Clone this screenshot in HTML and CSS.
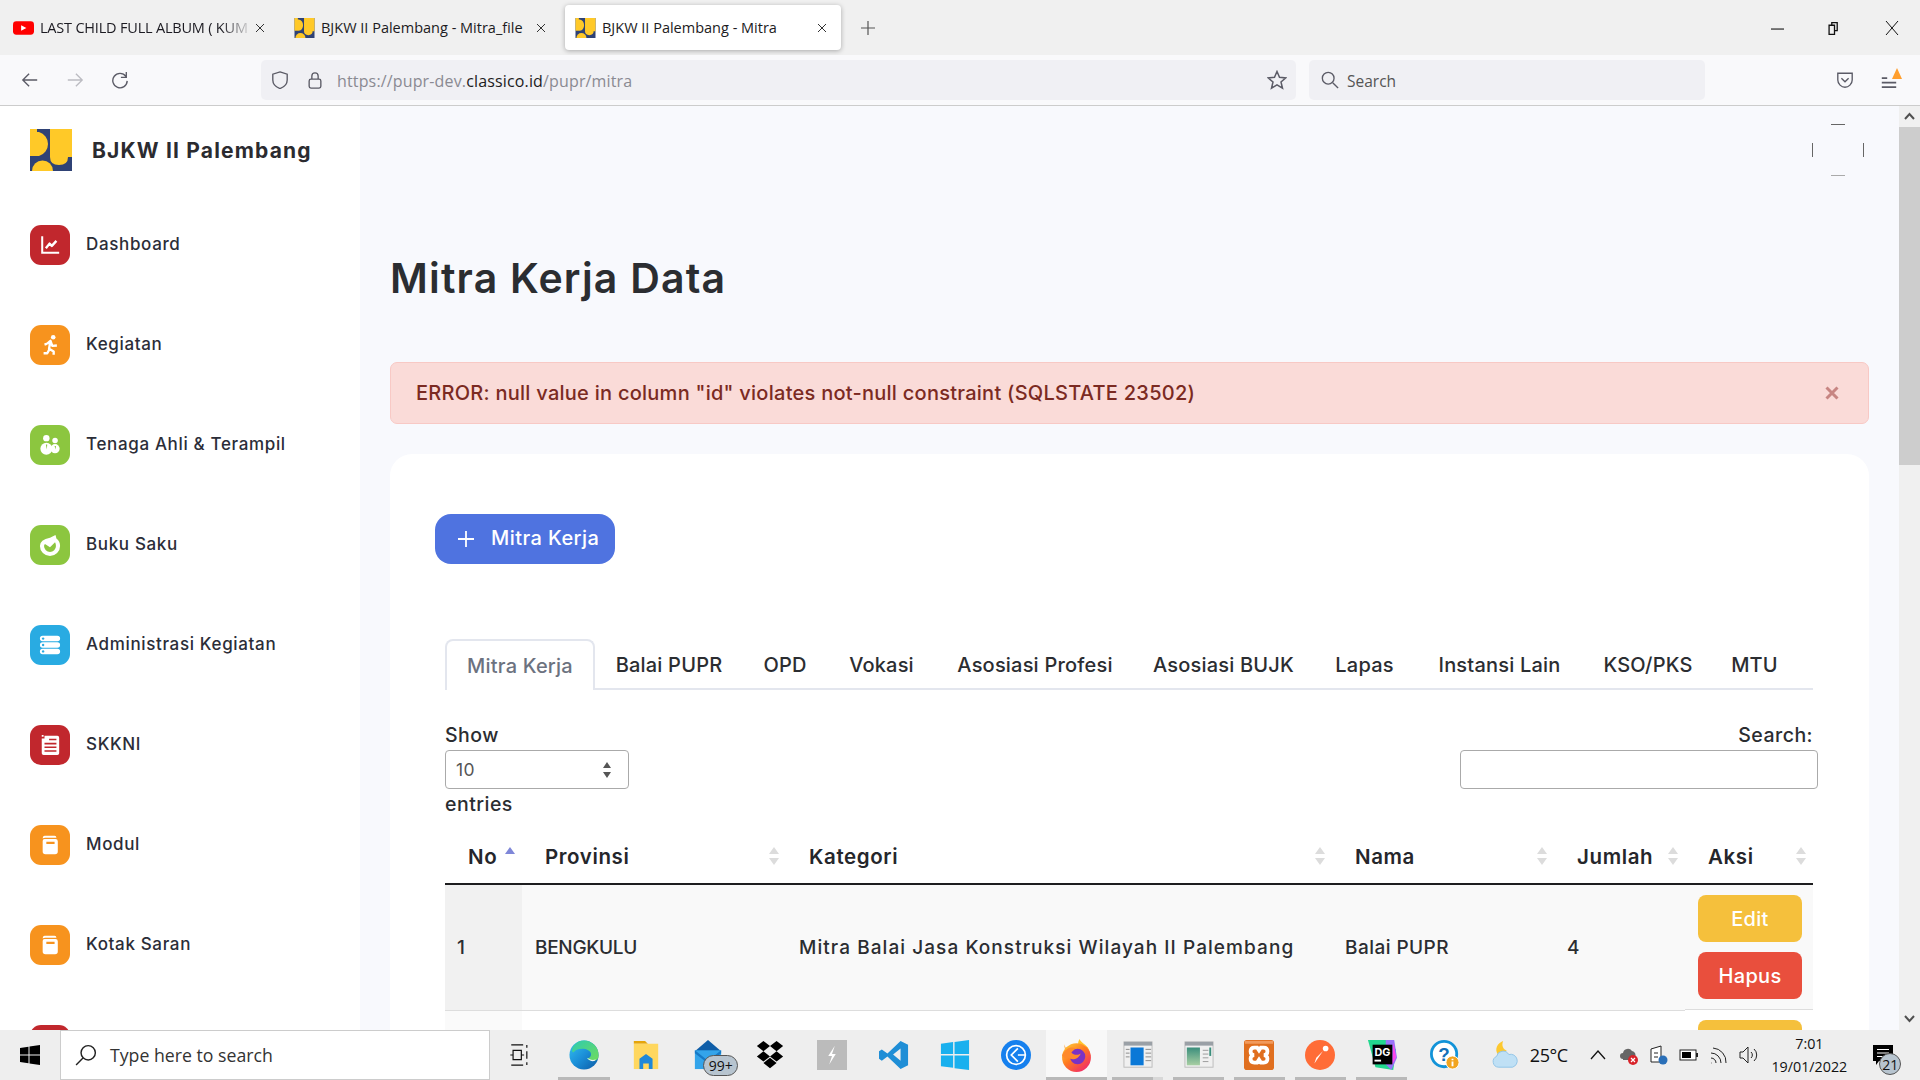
FILE: index.html
```html
<!DOCTYPE html>
<html lang="id">
<head>
<meta charset="utf-8">
<title>BJKW II Palembang - Mitra</title>
<link rel="stylesheet" href="styles.css">
</head>
<body>
<svg class="defs" width="0" height="0" aria-hidden="true">
  <symbol id="pupr" viewBox="0 0 42 42">
    <rect width="42" height="42" fill="#2f4275"/>
    <path fill="#ffc928" d="M0 0H7V3H9A12.500 12.500 0 0 1 9 27H0Z"/>
    <path fill="#ffc928" d="M2 42A10.500 10.500 0 0 1 23 42Z"/>
    <path fill="#ffc928" d="M20 0H42V28H38Q38 36 29 36Q20 36 20 28Z"/>
  </symbol>
  <symbol id="book" viewBox="0 0 24 24">
    <path fill="#fff" d="M6 2h11q2 0 2 2H7q-2 0-3 1q0-3 2-3Z"/>
    <path fill="#fff" fill-rule="evenodd" d="M6 5.500h12q2.500 0 2.500 2.500v11q0 3-3 3H7q-3 0-3-3V7.500q0-2 2-2ZM8 8.500v2.500h9V8.500Z"/>
  </symbol>
</svg>

<header class="tabbar">
  <div class="tab">
    <svg class="fav" viewBox="0 0 22 14"><rect width="22" height="14" rx="3.500" fill="#f00"/><path d="M8.500 4v6l5.500-3Z" fill="#fff"/></svg>
    <span class="tab-title fade">LAST CHILD FULL ALBUM ( KUM</span>
    <svg class="x" viewBox="0 0 10 10"><path d="M1 1l8 8M9 1l-8 8"/></svg>
  </div>
  <div class="tab">
    <svg class="fav"><use href="#pupr"/></svg>
    <span class="tab-title">BJKW II Palembang - Mitra_file</span>
    <svg class="x" viewBox="0 0 10 10"><path d="M1 1l8 8M9 1l-8 8"/></svg>
  </div>
  <div class="tab active">
    <svg class="fav"><use href="#pupr"/></svg>
    <span class="tab-title">BJKW II Palembang - Mitra</span>
    <svg class="x" viewBox="0 0 10 10"><path d="M1 1l8 8M9 1l-8 8"/></svg>
  </div>
  <svg class="newtab" viewBox="0 0 14 14"><path d="M7 0v14M0 7h14"/></svg>
  <div class="winctl">
    <svg viewBox="0 0 12 12"><path d="M0 6.500h12"/></svg>
    <svg viewBox="0 0 12 12"><path d="M3.500 3V.5h5V8H6M1 3h5v8.500H1Z" stroke-width="1.200"/></svg>
    <svg class="wx" viewBox="0 0 14 14"><path d="M1 0l12 14M13 0L1 14"/></svg>
  </div>
</header>

<nav class="toolbar">
  <svg class="tb" viewBox="0 0 20 20"><path d="M18 10H2M9 3l-7 7 7 7"/></svg>
  <svg class="tb dim" viewBox="0 0 20 20"><path d="M2 10h16M11 3l7 7-7 7"/></svg>
  <svg class="tb" viewBox="0 0 20 20"><path d="M16.500 6A8 8 0 1 0 18 11M17 1v6h-6"/></svg>
  <div class="urlbar">
    <svg class="ub shield" viewBox="0 0 20 20"><path d="M10 1l8 2.500v6.500c0 4.500-4 8-8 9.500-4-1.500-8-5-8-9.500V3.500Z"/></svg>
    <svg class="ub lock" viewBox="0 0 20 20"><rect x="3.500" y="9" width="13" height="10" rx="2"/><path d="M6.500 9V5.500a3.500 3.500 0 0 1 7 0V9"/></svg>
    <span class="url">https://pupr-dev.<b>classico.id</b>/pupr/mitra</span>
    <svg class="ub star" viewBox="0 0 20 20"><path d="M10 1.500l2.500 5.800 6.300.6-4.800 4.100 1.500 6.200-5.500-3.300-5.500 3.300 1.500-6.200L1.200 7.900l6.300-.6Z"/></svg>
  </div>
  <div class="searchbar">
    <svg class="ub" viewBox="0 0 20 20"><circle cx="8" cy="8" r="6.500"/><path d="M13 13l6 6"/></svg>
    <span>Search</span>
  </div>
  <svg class="tb pocket" viewBox="0 0 20 20"><path d="M2 2.500h16V10c0 4.500-4 8-8 8s-8-3.500-8-8Z"/><path d="M6 8l4 4 4-4"/></svg>
  <div class="menu">
    <svg viewBox="0 0 20 20"><path d="M2 8h6M2 13h16M2 18h16"/></svg>
    <i class="update"></i>
  </div>
</nav>

<div class="viewport">
  <aside class="sidebar">
    <div class="brand">
      <svg class="logo"><use href="#pupr"/></svg>
      <span>BJKW II Palembang</span>
    </div>
    <ul class="nav">
      <li><span class="ico red"><svg viewBox="0 0 24 24"><path class="s" d="M3.500 2.500V20.500H22"/><path class="s t" d="M7.500 15.500l4-5 2.500 2.500 5-5.500"/></svg></span><span class="lbl">Dashboard</span></li>
      <li><span class="ico orange"><svg viewBox="0 0 24 24"><circle cx="15.500" cy="3.500" r="2.500" fill="#fff"/><path class="s t" d="M5 21h4l2.500-4.500-.5-.5M9 10.500l3.500-3 2 5.500 5-.5M12.500 7.500L11 16l5 3v3.500M9 10.500l-3 1"/></svg></span><span class="lbl">Kegiatan</span></li>
      <li><span class="ico green"><svg viewBox="0 0 24 24"><circle cx="8" cy="4.500" r="3.500" fill="#fff"/><circle cx="17.500" cy="7" r="3" fill="#fff"/><circle cx="8" cy="16" r="6.500" fill="#fff"/><circle cx="17.500" cy="16" r="5" fill="#fff"/><path d="M7.500 11.500h1.500l-.5 5.500ZM17 13h1.500l-.5 4Z" fill="#8cc63f"/></svg></span><span class="lbl">Tenaga Ahli &amp; Terampil</span></li>
      <li><span class="ico green"><svg viewBox="0 0 24 24"><path fill="#fff" fill-rule="evenodd" d="M12 4l6-3 1 4q4 3 4 8a11 11 0 0 1-22 0Q1 6 12 4ZM6.500 11l5.500 3.500 5.500-5.500q1 2 1 4a6.500 6.500 0 0 1-13 0Q5.500 12 6.500 11Z"/></svg></span><span class="lbl">Buku Saku</span></li>
      <li><span class="ico blue"><svg viewBox="0 0 24 24"><rect x="1" y="2" width="22" height="6" rx="3" fill="#fff"/><rect x="1" y="9" width="22" height="6" rx="3" fill="#fff"/><rect x="1" y="16" width="22" height="6" rx="3" fill="#fff"/><circle cx="4.500" cy="5" r="1.300" fill="#29abe2"/><circle cx="4.500" cy="12" r="1.300" fill="#29abe2"/><circle cx="4.500" cy="19" r="1.300" fill="#29abe2"/></svg></span><span class="lbl">Administrasi Kegiatan</span></li>
      <li><span class="ico red"><svg viewBox="0 0 24 24"><path fill="#fff" d="M3 1h2v2H3ZM6 2h14q2 0 2 2v17q0 2-2 2H5q-2 0-2-2V5h3Z"/><path stroke="#c1272d" stroke-width="1.800" d="M11 6h8M6 10.500h13M6 14.500h13M6 18.500h13"/></svg></span><span class="lbl">SKKNI</span></li>
      <li><span class="ico orange"><svg viewBox="0 0 24 24"><use href="#book"/></svg></span><span class="lbl">Modul</span></li>
      <li><span class="ico orange"><svg viewBox="0 0 24 24"><use href="#book"/></svg></span><span class="lbl">Kotak Saran</span></li>
      <li><span class="ico red"></span></li>
    </ul>
  </aside>

  <main class="main">
    <div class="topbar">
      <svg class="avatar" viewBox="0 0 54 54"><path d="M20 1.500h14M1.500 20v14M52.500 20v14" stroke="#666"/><path d="M20 52.500h14" stroke="#aaa"/></svg>
    </div>
    <h1 class="title">Mitra Kerja Data</h1>
    <div class="alert">
      <span>ERROR: null value in column "id" violates not-null constraint (SQLSTATE 23502)</span>
      <svg class="alert-x" viewBox="0 0 14 14"><path d="M1.500 1.500l11 11M12.500 1.500l-11 11"/></svg>
    </div>
    <section class="card">
      <button class="add" type="button"><svg viewBox="0 0 18 18"><path d="M9 1v16M1 9h16"/></svg><span>Mitra Kerja</span></button>
      <div class="panel">
        <div class="tabs">
          <a class="on">Mitra Kerja</a><a>Balai PUPR</a><a>OPD</a><a>Vokasi</a><a>Asosiasi Profesi</a><a>Asosiasi BUJK</a><a>Lapas</a><a>Instansi Lain</a><a>KSO/PKS</a><a>MTU</a>
        </div>
        <div class="controls">
          <div class="length">
            <div>Show</div>
            <div class="select"><span>10</span><svg viewBox="0 0 10 18"><path d="M5 1l4 6H1ZM5 17l4-6H1Z" fill="#555"/></svg></div>
            <div>entries</div>
          </div>
          <div class="filter">
            <div>Search:</div>
            <input class="input" type="text" aria-label="Search">
          </div>
        </div>
        <table class="table">
          <colgroup><col class="c1"><col class="c2"><col class="c3"><col class="c4"><col class="c5"><col class="c6"></colgroup>
          <thead>
            <tr><th class="asc">No</th><th>Provinsi</th><th>Kategori</th><th>Nama</th><th>Jumlah</th><th>Aksi</th></tr>
          </thead>
          <tbody>
            <tr class="odd">
              <td class="sorted">1</td><td class="caps">BENGKULU</td><td class="long">Mitra Balai Jasa Konstruksi Wilayah II Palembang</td><td>Balai PUPR</td><td>4</td>
              <td class="act"><a class="btn edit">Edit</a><a class="btn del">Hapus</a></td>
            </tr>
            <tr>
              <td class="sorted"></td><td></td><td></td><td></td><td></td>
              <td class="act"><span class="btn edit"></span><span class="btn del"></span></td>
            </tr>
          </tbody>
        </table>
      </div>
    </section>
  </main>

  <div class="scrollbar">
    <svg class="sb-btn" viewBox="0 0 21 21"><path d="M6 13l4.500-5 4.500 5"/></svg>
    <div class="thumb"></div>
    <svg class="sb-btn bottom" viewBox="0 0 21 21"><path d="M6 8l4.500 5 4.500-5"/></svg>
  </div>
</div>

<footer class="taskbar">
  <div class="start"><svg viewBox="0 0 20 20"><path fill="#000" d="M0 3l8.500-1.200V9.500H0ZM9.500 1.600L20 0v9.500H9.500ZM0 10.500h8.500v7.700L0 17ZM9.500 10.500H20V20L9.500 18.400Z"/></svg></div>
  <div class="tsearch">
    <svg viewBox="0 0 20 20"><circle cx="12" cy="8" r="6.500"/><path d="M7.500 12.500L1 19"/></svg>
    <span>Type here to search</span>
  </div>
  <div class="taskview"><svg viewBox="0 0 20 24"><path d="M1 1h13M1 23h13M3 7h9v10H3ZM0 12h3M12 12h3M18 1v3M18 8v8M18 20v3"/></svg></div>

  <div class="task run wide"><svg viewBox="0 0 32 32"><defs><linearGradient id="edge" x1="0" y1="0" x2="1" y2="1"><stop offset="0" stop-color="#35c1f1"/><stop offset=".5" stop-color="#1b8fd8"/><stop offset="1" stop-color="#0c59a4"/></linearGradient><linearGradient id="edge2" x1="0" y1="0" x2="1" y2="1"><stop offset="0" stop-color="#2ecbb0"/><stop offset="1" stop-color="#6fdc5c"/></linearGradient></defs><circle cx="16" cy="16" r="15.500" fill="url(#edge)"/><path fill="url(#edge2)" d="M16 .5A15.500 15.500 0 0 1 31.500 17q0 5-6 5-4 0-6-2 4-1 4-5C23 9 10 7 5 13 2 14 3 7 6 5 9 2 12 .5 16 .5Z"/><path fill="#eef4f8" d="M19 19c3 2 7 3 9.500 1.500-.5 3-6 3-9.500-1.500Z"/></svg></div>
  <div class="task wide"><svg viewBox="0 0 32 32"><path fill="#e5a50a" d="M3 1h12l3 3h-15Z"/><path fill="#ffd75e" d="M3 4h26v27H3Z"/><path fill="#1e88d8" d="M9 31V20l7-5 7 5v11h-4v-6h-6v6Z"/></svg></div>
  <div class="task wide"><svg viewBox="0 0 32 32"><path fill="#0f5ea8" d="M16 0l14 12H2Z"/><rect x="2" y="11" width="28" height="20" fill="#33a4ea"/><path fill="#1679c6" d="M2 11l14 11 14-11v3L16 25 2 14Z"/></svg><span class="badge mail">99+</span></div>
  <div class="task wide"><svg viewBox="0 0 32 32"><path fill="#000" d="M9 1l7 5.500L9 12 2 6.500ZM23 1l7 5.500L23 12l-7-5.500ZM9 12l7 5.500L9 23l-7-5.500ZM23 12l7 5.500L23 23l-7-5.500ZM16 19l7 5.500L16 30l-7-5.500Z"/></svg></div>
  <div class="task wide"><svg viewBox="0 0 32 32"><rect width="32" height="32" fill="#bbb"/><path fill="#fff" d="M19 6l-7 11h4l-3 9 7-11h-4Z"/></svg></div>
  <div class="task"><svg viewBox="0 0 32 32"><path fill="#1f8ed6" d="M23 1l8 4v22l-8 4-14-13.500L3 22l-3-2V12l3-2 6 4.500ZM23 9l-8 6.500 8 6.500Z"/></svg></div>
  <div class="task"><svg viewBox="0 0 32 32"><path fill="#19b0ee" d="M1 4l13-2v13H1ZM15.500 2L31 0v15H15.500ZM1 16.500h13v13L1 28ZM15.500 16.500H31V32l-15.500-2Z"/></svg></div>
  <div class="task narrow"><svg viewBox="0 0 32 32"><circle cx="16" cy="16" r="16" fill="#1680ee"/><circle cx="16" cy="16" r="10" fill="none" stroke="#fff" stroke-width="1.800"/><path d="M18 9l-7 7 7 7M18 16h8" fill="none" stroke="#fff" stroke-width="1.800"/></svg></div>
  <div class="task run active"><svg class="fox" viewBox="0 0 32 32"><defs><linearGradient id="ff" x1="0" y1="0" x2=".8" y2="1"><stop offset="0" stop-color="#ffd53d"/><stop offset=".5" stop-color="#ff7a1f"/><stop offset="1" stop-color="#f0266f"/></linearGradient></defs><path fill="#ffc52e" d="M19 0c1 4 9 6 10 13l-9-2c-3-4-3-8-1-11Z"/><path fill="#ff9a2a" d="M4 5l2 5 6-1-6 8Z"/><circle cx="16" cy="18" r="14" fill="url(#ff)"/><circle cx="17" cy="17" r="7.500" fill="#7a32c4"/><path fill="#ff8a2b" d="M2 16c3-7 9-9 13-7l-4 4c2 3 7 3 9 1-2 6-9 7-12 4-2 2-4 1-6-2Z"/></svg></div>
  <div class="task run split"><svg viewBox="0 0 32 32"><rect x="1" y="2" width="30" height="27" fill="#f0f0f0" stroke="#bbb"/><rect x="1" y="2" width="30" height="4" fill="#9aa0a6"/><rect x="8" y="8" width="14" height="19" fill="#0a78d7"/><path d="M3 10h4M3 14h4M3 18h4M24 10h6M24 14h6M24 18h6M24 22h6" stroke="#888"/></svg></div>
  <div class="task run narrow"><svg viewBox="0 0 32 32"><rect x="1" y="2" width="30" height="27" fill="#f0f0f0" stroke="#bbb"/><rect x="1" y="2" width="30" height="4" fill="#9aa0a6"/><defs><linearGradient id="ap" x1="0" y1="0" x2="0" y2="1"><stop offset="0" stop-color="#3b8e7c"/><stop offset="1" stop-color="#a8cfa3"/></linearGradient></defs><rect x="3" y="8" width="14" height="19" fill="url(#ap)"/><path d="M20 11h6M20 15h6M20 19h6M20 23h6" stroke="#999"/><rect x="27" y="8" width="2" height="9" fill="#3b8e7c"/></svg></div>
  <div class="task run"><svg viewBox="0 0 32 32"><rect width="32" height="32" rx="3" fill="#e06f1f"/><rect x="1" y="1" width="30" height="3" fill="#f19a5c"/><path fill="none" stroke="#fff" stroke-width="4" d="M11 8h3l2 3 2-3h3q4 0 4 4t-4 4q4 0 4 4t-4 4h-3l-2-3-2 3h-3q-4 0-4-4t4-4q-4 0-4-4t4-4Z"/></svg></div>
  <div class="task run"><svg viewBox="0 0 32 32"><circle cx="16" cy="16" r="16" fill="#ff6c37"/><path d="M24 7l-5 5-9 13 2-6Z" fill="#fff"/><circle cx="22" cy="9" r="3" fill="#fff"/></svg></div>
  <div class="task run gapr"><svg viewBox="0 0 32 32"><path fill="#22d88f" d="M1 0h20L31 10 28 32 9 29Z"/><path fill="#9775f8" d="M20 0h9l3 19-6 13-6-6Z"/><path fill="#ff45ed" d="M28 3l3 15-4 8Z"/><rect x="6" y="5" width="21" height="21" fill="#000"/><text x="16.500" y="17" class="dg">DG</text><rect x="8" y="21" width="7" height="2" fill="#fff"/></svg></div>
  <div class="task"><svg viewBox="0 0 32 32"><circle cx="15" cy="15" r="13.500" fill="#fff" stroke="#1293d8" stroke-width="3"/><text x="15" y="22" class="help">?</text><circle cx="24" cy="24" r="7" fill="#f2a51f" stroke="#fff"/><path d="M24 20v1.500M24 23v5" stroke="#fff" stroke-width="2"/></svg></div>

  <div class="tray">
    <svg class="weather" viewBox="0 0 32 32"><path fill="#fdc82f" d="M14 1c-2 5 0 9 4 10l-9 5C4 10 8 3 14 1Z"/><path fill="#bfe0f5" stroke="#8fc3e6" d="M9 29a6 6 0 0 1-2-11.500 7 7 0 0 1 13-2A6.500 6.500 0 0 1 24 29Z"/></svg>
    <span class="temp">25°C</span>
    <svg class="chev" viewBox="0 0 16 10"><path d="M1 9l7-8 7 8"/></svg>
    <svg class="tri" viewBox="0 0 20 20"><path fill="#666" d="M4 14a3 3 0 0 1 0-6 5 5 0 0 1 9-2 4 4 0 0 1 3 6l-3 3H4Z"/><circle cx="14" cy="15" r="5" fill="#d8232a"/><path d="M12 13l4 4M16 13l-4 4" stroke="#fff" stroke-width="1.200"/></svg>
    <svg class="tri" viewBox="0 0 20 20"><path d="M2 4l10-3v16H2Z" fill="#fff" stroke="#222"/><path d="M5 8h4M5 12h4" stroke="#222"/><circle cx="14" cy="15" r="4.500" fill="#2a6fb8"/></svg>
    <svg class="tri" viewBox="0 0 20 20"><rect x="1" y="5" width="16" height="10" fill="#fff" stroke="#222"/><rect x="3" y="7" width="9" height="6" fill="#000"/><rect x="17" y="8" width="2" height="4" fill="#222"/></svg>
    <svg class="tri thin" viewBox="0 0 20 20"><path d="M2 18h.5M2 13a5 5 0 0 1 5 5M2 8a10 10 0 0 1 10 10M4 3a14 14 0 0 1 13 15"/></svg>
    <svg class="tri thin" viewBox="0 0 20 20"><path d="M1 7h3l5-5v16l-5-5H1ZM12 7a4 4 0 0 1 0 6M15 4a8 8 0 0 1 0 12"/></svg>
    <div class="clock"><span>7:01</span><span>19/01/2022</span></div>
    <div class="notify">
      <svg viewBox="0 0 20 20"><path d="M0 0h20v16H6l-3 4v-4H0Z" fill="#000"/><path d="M4 4.500h12M4 8h12M4 11.500h12" stroke="#fff"/></svg>
      <span class="badge count">21</span>
    </div>
  </div>
</footer>
</body>
</html>
```

FILE: styles.css
```css
* { box-sizing: border-box; }
html, body { margin: 0; height: 100%; overflow: hidden; }
body {
  display: flex;
  flex-direction: column;
  width: 1920px;
  height: 1080px;
  font-family: Inter, "Liberation Sans", sans-serif;
  color: #2a2c33;
  background: #fff;
}
svg { display: block; flex: none; }
.defs { position: absolute; }

/* browser tabs */
.tabbar {
  height: 55px;
  flex: none;
  display: flex;
  align-items: flex-start;
  padding: 5px 0 0 3px;
  gap: 5px;
  background: #f0f0f0;
  font: 14.500px "Open Sans", sans-serif;
  color: #1c1b22;
}
.tab {
  width: 276px;
  height: 45px;
  display: flex;
  align-items: center;
  padding: 0 14px 0 10px;
  border-radius: 4px;
}
.tab.active {
  background: #fff;
  box-shadow: 0 1px 5px rgba(0,0,0,.3);
}
.fav { width: 21px; height: 20px; margin-right: 6px; }
.tab:first-child .fav { height: 14px; }
.tab-title { flex: 1; white-space: nowrap; overflow: hidden; }
.fade { -webkit-mask-image: linear-gradient(90deg, #000 85%, transparent); mask-image: linear-gradient(90deg, #000 85%, transparent); margin-right: 2px; letter-spacing: -.2px; }
.x { width: 10px; height: 10px; fill: none; stroke: #333; stroke-width: 1; }
.newtab { width: 14px; height: 14px; margin: 16px 0 0 15px; fill: none; stroke: #555; stroke-width: 1.200; }
.winctl {
  margin-left: auto;
  display: flex;
  align-items: center;
  gap: 44px;
  padding: 16px 21px 0 0;
}
.winctl svg { width: 13px; height: 13px; fill: none; stroke: #111; stroke-width: 1; }
.winctl .wx { width: 14px; height: 14px; }

/* browser toolbar */
.toolbar {
  height: 51px;
  flex: none;
  display: flex;
  align-items: center;
  padding: 0 0 1px 21px;
  background: #f9f9fb;
  border-bottom: 1px solid #ccc;
  font: 16px "Open Sans", sans-serif;
}
.tb { width: 18px; height: 18px; margin-right: 27px; fill: none; stroke: #5b5b66; stroke-width: 1.500; }
.tb.dim { stroke: #bcbcc2; }
.urlbar, .searchbar {
  height: 40px;
  display: flex;
  align-items: center;
  background: #f0f0f4;
  border-radius: 5px;
}
.urlbar { width: 1035px; margin-left: 105px; padding: 0 9px 0 10px; }
.searchbar { width: 396px; margin-left: 13px; padding-left: 12px; color: #555; gap: 8px; font-size: 15.500px; }
.searchbar span { padding-top: 2px; }
.ub { width: 18px; height: 18px; fill: none; stroke: #5b5b66; stroke-width: 1.500; }
.lock { margin-left: 17px; }
.url { margin-left: 13px; padding-top: 2px; color: #8a8a92; flex: 1; font-size: 16px; letter-spacing: .15px; }
.url b { font-weight: 400; color: #1c1b22; }
.star { width: 20px; height: 20px; }
.pocket { margin: 0 0 0 131px; }
.menu { position: relative; margin-left: 26px; }
.menu svg { width: 18px; height: 18px; fill: none; stroke: #5b5b66; stroke-width: 2; }
.update { position: absolute; right: -4px; top: -3px; width: 0; height: 0; border-left: 5px solid transparent; border-right: 5px solid transparent; border-bottom: 11px solid #ff9f2e; }

/* page */
.viewport { flex: 1; min-height: 0; display: flex; overflow: hidden; background: #f8f9fd; }
.sidebar { width: 360px; flex: none; background: #fff; padding: 23px 0 0 30px; }
.brand { display: flex; align-items: center; gap: 20px; height: 42px; font-size: 21px; font-weight: 700; letter-spacing: 1.180px; color: #2b2b30; }
.logo { width: 42px; height: 42px; }
.nav { list-style: none; margin: 54px 0 0; padding: 0; display: flex; flex-direction: column; gap: 60px; }
.nav li { display: flex; align-items: center; gap: 16px; height: 40px; font-size: 17px; font-weight: 500; letter-spacing: .65px; color: #2b2d38; white-space: nowrap; }
.lbl { padding-bottom: 2px; }
.ico { width: 40px; height: 40px; flex: none; border-radius: 11px; display: flex; align-items: center; justify-content: center; }
.ico svg { width: 22px; height: 22px; }
.red { background: #c1272d; }
.orange { background: #f7931e; }
.green { background: #8cc63f; }
.blue { background: #29abe2; }
.s { fill: none; stroke: #fff; stroke-width: 2.200; }
.t { stroke-width: 2.600; stroke-linejoin: round; }

.main { flex: 1; min-width: 0; padding: 0 30px; }
.topbar { display: flex; justify-content: flex-end; height: 70px; padding: 17px 4px 0 0; }
.avatar { width: 54px; height: 54px; fill: none; stroke-width: 1; }
.title { margin: 78px 0 0; font-size: 41px; line-height: 48px; font-weight: 600; color: #2b2d31; letter-spacing: 1.200px; }
.alert {
  margin-top: 60px;
  height: 62px;
  display: flex;
  align-items: center;
  justify-content: space-between;
  padding: 0 29px 0 25px;
  background: #fadbd8;
  border: 1px solid #f8c9c5;
  border-radius: 7px;
  color: #7b2a22;
  font-size: 20px;
  font-weight: 500;
  letter-spacing: .26px;
}
.alert-x { width: 14px; height: 14px; fill: none; stroke: #c78582; stroke-width: 3; }
.card { margin-top: 30px; padding: 60px 45px 0; background: #fff; border-radius: 22px; height: 700px; }
.add {
  display: flex;
  align-items: center;
  gap: 16px;
  width: 180px;
  height: 50px;
  padding: 0 0 0 22px;
  border: 0;
  border-radius: 16px;
  background: #4f73e0;
  color: #fff;
  font: 500 20px Inter, sans-serif;
  letter-spacing: .43px;
}
.add span { padding-bottom: 2px; }
.add svg { width: 18px; height: 18px; fill: none; stroke: #fff; stroke-width: 1.800; }
.panel { margin-top: 75px; padding: 0 11px 0 10px; }
.tabs {
  display: grid;
  grid-template-columns: 150px 148px 84px 109px 198px 179px 103px 167px 130px 83px;
  height: 51px;
  border-bottom: 2px solid #e3e6ee;
  font-size: 20px;
  font-weight: 500;
  letter-spacing: .2px;
  color: #2b2d31;
}
.tabs a { display: flex; align-items: center; justify-content: center; white-space: nowrap; height: 51px; }
.tabs .on { color: #6c7280; background: #fff; border: 2px solid #e3e6ee; border-bottom: 0; border-radius: 8px 8px 0 0; }
.controls { display: flex; justify-content: space-between; margin-top: 32px; font-size: 19.500px; line-height: 27px; font-weight: 500; letter-spacing: .48px; color: #2b2d31; }
.select {
  width: 184px;
  height: 39px;
  margin: 1px 0 2px;
  display: flex;
  align-items: center;
  justify-content: space-between;
  padding: 0 16px 0 10px;
  border: 1px solid #aaa;
  border-radius: 4px;
  color: #555;
  font-size: 17.500px;
  font-weight: 400;
}
.select svg { width: 10px; height: 18px; }
.filter { text-align: right; }
.input { display: block; width: 358px; height: 39px; margin: 1px -5px 0 0; border: 1px solid #aaa; border-radius: 4px; background: #fff; }
.table { width: 100%; table-layout: fixed; border-collapse: collapse; margin-top: 12px; }
.c1 { width: 77px; } .c2 { width: 264px; } .c3 { width: 546px; } .c4 { width: 222px; } .c5 { width: 131px; } .c6 { width: 128px; }
th {
  position: relative;
  height: 54px;
  padding: 0 0 0 23px;
  text-align: left;
  font-size: 20.500px;
  font-weight: 600;
  letter-spacing: .6px;
  color: #25262b;
  border-bottom: 2px solid #1d1d1f;
  white-space: nowrap;
}
th::before, th::after {
  content: "";
  position: absolute;
  right: 7px;
  border-left: 5.500px solid transparent;
  border-right: 5.500px solid transparent;
}
th::before { top: 17px; border-bottom: 7px solid #dcdcdc; }
th::after { top: 28px; border-top: 7px solid #dcdcdc; }
.asc::before { border-bottom-color: #7f87d8; }
.asc::after { display: none; }
td { padding: 10px 13px; font-size: 19px; font-weight: 500; letter-spacing: .45px; color: #2b2d31; border-bottom: 1px solid #ddd; white-space: nowrap; }
td.caps { letter-spacing: -.3px; }
td.long { letter-spacing: 1.070px; }
.odd td { background: #f9f9f9; }
td.sorted { background: #fafafa; padding-left: 12px; }
.odd td.sorted { background: #f1f1f1; }
.act { display: flex; flex-direction: column; gap: 10px; }
.btn { display: flex; align-items: center; justify-content: center; width: 104px; height: 47px; border-radius: 8px; color: #fff; font-size: 20px; font-weight: 500; letter-spacing: .3px; }
.edit { background: #f5c03c; }
.del { background: #e94f3d; }

.scrollbar { width: 21px; flex: none; display: flex; flex-direction: column; background: #f0f0f0; }
.sb-btn { width: 21px; height: 21px; fill: none; stroke: #505050; stroke-width: 2; }
.sb-btn.bottom { margin-top: auto; margin-bottom: 1px; }
.thumb { height: 338px; background: #cdcdcd; }

/* windows taskbar */
.taskbar {
  height: 50px;
  flex: none;
  display: flex;
  align-items: stretch;
  background: #eee;
  font-family: "Open Sans", sans-serif;
  color: #111;
  position: relative;
}
.start { width: 60px; display: flex; align-items: center; justify-content: center; }
.start svg { width: 20px; height: 20px; }
.tsearch { width: 430px; display: flex; align-items: center; gap: 13px; padding-left: 14px; background: #fff; border: 1px solid #ccc; font-size: 17.700px; color: #333; }
.tsearch svg { width: 22px; height: 22px; fill: none; stroke: #222; stroke-width: 1.300; }
.taskview { width: 63px; display: flex; align-items: center; justify-content: center; padding-right: 5px; }
.taskview svg { width: 19px; height: 22px; fill: none; stroke: #111; stroke-width: 1.300; }
.task { position: relative; width: 61.200px; flex: none; display: flex; align-items: center; justify-content: center; }
.task.wide { width: 62.100px; }
.task.narrow { width: 60.200px; }
.task.gapr { margin-right: 2.500px; }
.task svg { width: 30px; height: 30px; }
.task svg.fox { width: 33px; height: 33px; }
.task.active { background: #f8f8f8; }
.task.run::after { content: ""; position: absolute; left: 5px; right: 5px; bottom: 0; height: 3px; background: #b9b9b9; }
.task.active::after { left: 0; right: 0; }
.task.split::after { background: linear-gradient(90deg, #b9b9b9 80%, #d8d8d8 80%); }
.dg { font: 700 11.500px Inter, sans-serif; fill: #fff; text-anchor: middle; }
.help { font: 700 20px "Liberation Sans", sans-serif; fill: #1370b8; text-anchor: middle; }
.badge { position: absolute; display: flex; align-items: center; justify-content: center; background: #b7c4cf; border: 1px solid #555; border-radius: 12px; color: #111; font-family: "Open Sans", sans-serif; }
.mail { left: 26px; top: 25px; width: 35px; height: 21px; font-size: 14px; }
.tray { flex: 1; display: flex; align-items: center; padding-left: 14px; font-size: 18px; }
.weather { width: 30px; height: 30px; }
.temp { margin-left: 10px; width: 36px; font-size: 18px; letter-spacing: -.5px; white-space: nowrap; }
.chev { width: 16px; height: 10px; margin-left: 24px; fill: none; stroke: #111; stroke-width: 1.300; }
.tri { width: 20px; height: 20px; margin-left: 10px; }
.chev + .tri { margin-left: 13px; }
.thin { fill: none; stroke: #222; stroke-width: 1; }
.clock { display: flex; flex-direction: column; align-items: center; width: 84px; margin-left: 8.500px; font-size: 14.300px; line-height: 23px; }
.notify { position: relative; margin-left: 22px; }
.notify svg { width: 20px; height: 20px; }
.count { left: 6px; top: 8px; width: 22px; height: 22px; font-size: 14px; }
```
